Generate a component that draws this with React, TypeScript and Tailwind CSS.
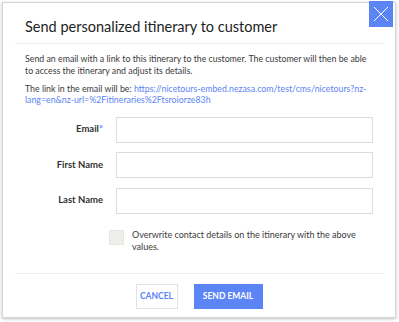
import React from "react";

const Field = ({ label, required }: { label: string; required?: boolean }) => (
  <div className="flex items-center">
    <label className="w-[78px] text-right text-[9.5px] font-bold text-[#333]">
      {label}
      {required && <span className="text-[#5b84f4]">*</span>}
    </label>
    <input
      type="text"
      className="ml-[13px] h-[26px] w-[257px] border border-[#dcdcdc] bg-white outline-none"
    />
  </div>
);

export default function App() {
  return (
    <div className="w-[399px] h-[322px] bg-white font-['Lato',sans-serif] text-[#3a3a3a]">
      <div className="relative ml-[2px] pt-[2px] w-[394px]">
        <div className="h-[316px] border border-[#d6d6d6] bg-white shadow-[0_1px_3px_rgba(0,0,0,0.25)] flex flex-col">
          <h1 className="px-[22px] pt-[15px] pb-[8px] text-[14.5px] leading-[17px] text-[#222]">
            Send personalized itinerary to customer
          </h1>
          <div className="mx-[12px] border-t border-[#ececec]" />

          <div className="px-[22px] pt-[9px] text-[8.8px] leading-[11.5px]">
            <p>
              Send an email with a link to this itinerary to the customer. The customer will then be able
              to access the itinerary and adjust its details.
            </p>
            <p className="mt-[6.5px]">
              The link in the email will be:{" "}
              <a className="text-[#5b84f4] break-words">
                https://nicetours-embed.nezasa.com/test/cms/nicetours?nz-lang=en&amp;nz-url=%2Fitineraries%2Ftsroiorze83h
              </a>
            </p>
          </div>

          <div className="px-[22px] pt-[11px] flex flex-col gap-[9.5px]">
            <Field label="Email" required />
            <Field label="First Name" />
            <Field label="Last Name" />
          </div>

          <div className="flex pl-[106px] pt-[16px]">
            <div className="w-[15px] h-[15px] shrink-0 bg-[#eeeeea] border border-[#e6e6e2]" />
            <p className="ml-[8px] w-[235px] text-[9px] leading-[12px] -mt-[0.5px]">
              Overwrite contact details on the itinerary with the above values.
            </p>
          </div>

          <div className="mx-[12px] mt-[20px] border-t border-[#ececec]" />

          <div className="flex justify-center gap-[16px] pt-[10px]">
            <button className="h-[25px] w-[42px] border border-[#e2e2e2] bg-white text-[#5b84f4] text-[8.5px] font-bold">
              CANCEL
            </button>
            <button className="h-[25px] w-[69px] bg-[#5b84f4] text-white text-[8.5px] font-bold">
              SEND EMAIL
            </button>
          </div>
        </div>

        <button className="absolute right-[3px] top-[1px] w-[24px] h-[26px] bg-[#5b84f4] flex items-center justify-center">
          <svg width="16" height="16" viewBox="0 0 16 16" stroke="white" strokeWidth="1" fill="none">
            <path d="M1 1L15 15M15 1L1 15" />
          </svg>
        </button>
      </div>
    </div>
  );
}
